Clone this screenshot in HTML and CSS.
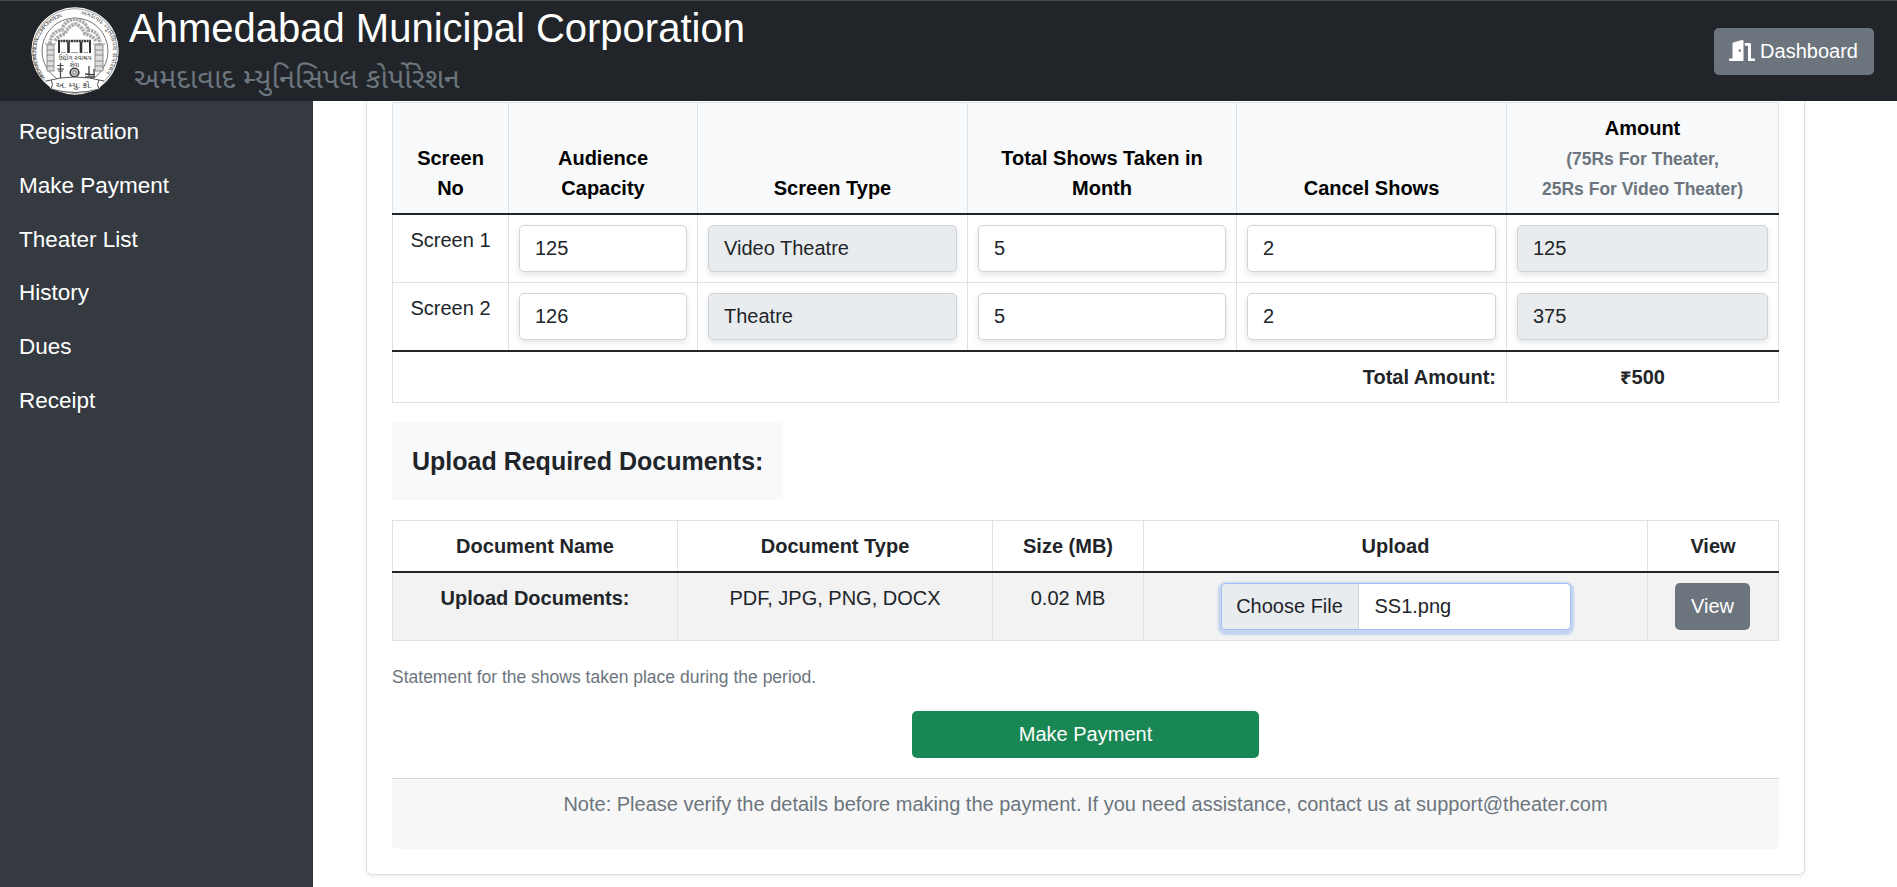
FILE: index.html
```html
<!DOCTYPE html>
<html lang="en">
<head>
<meta charset="utf-8">
<title>Ahmedabad Municipal Corporation</title>
<link rel="stylesheet" href="styles.css">
</head>
<body>
<header class="topbar">
  <svg class="seal" viewBox="0 0 88 88" aria-hidden="true">
    <defs>
      <path id="arcLeft" d="M14.2 70.5A38 38 0 0 1 36 8.500"/>
      <path id="arcRight" d="M50 7.500A37 37 0 0 1 71.500 70"/>
    </defs>
    <circle cx="44" cy="44" r="43.700" fill="#fff"/>
    <circle cx="44" cy="44" r="42.300" fill="none" stroke="#777" stroke-width=".7"/>
    <circle cx="44" cy="44" r="33" fill="none" stroke="#555" stroke-width=".8"/>
    <text class="seal-ring"><textPath href="#arcLeft" textLength="74">AMDAVAD MUNICIPAL CORPORATION</textPath></text>
    <text class="seal-ring seal-ring-gu"><textPath href="#arcRight" textLength="76">અમદાવાદ મ્યુનિસિપલ કોર્પોરેશન</textPath></text>
    <g fill="none" stroke="#aaa" stroke-width="3.600" stroke-dasharray="2.500 .8">
      <path d="M19 37Q20 24 31 23Q33 14 44 12Q55 14 57 23Q68 24 69 37"/>
      <path d="M24 34Q28 28 34 27Q37 19 44 17Q51 19 54 27Q61 28 65 34"/>
    </g>
    <g fill="#ddd" stroke="#777" stroke-width=".8">
      <path d="M16 38h7v26h-7zM64 38h8v26h-8z"/>
      <path d="M14 37h11M62 37h12M16 43h7M16 48h7M16 54h7M16 59h7M64 43h8M64 48h8M64 54h8M64 59h8"/>
    </g>
    <g stroke="#333" fill="none">
      <path d="M27 34h33" stroke-width="2.500" stroke-dasharray="2 .6"/>
      <path d="M28 35v11M59 35v11" stroke-width="2"/>
      <path d="M37.500 35v11M50 35v11" stroke-width="2.600"/>
      <path d="M30 45.500h5M40 45.500h7M53 45.500h4" stroke="#999" stroke-width="1"/>
    </g>
    <text class="seal-text" x="44" y="52.800" font-size="6.500" textLength="33" lengthAdjust="spacingAndGlyphs">ઉદ્યોગ સ્વાશ્રય</text>
    <text class="seal-text" x="43.500" y="59.500" font-size="6">સેવા</text>
    <circle cx="43.500" cy="65.500" r="4.400" fill="#bbb" stroke="#333" stroke-width="1.400"/>
    <circle cx="43.500" cy="65.500" r="1.500" fill="#fff" stroke="#444" stroke-width=".6"/>
    <g fill="none" stroke="#444">
      <path d="M29.500 56v17M26.500 58.500h6M26 62h7M27 64h5" stroke-width="1.200"/>
      <path d="M58 59v10M63 62v6M54 70h10M54 67l10 1M56 73l5-2" stroke-width="1.300"/>
    </g>
    <path d="M15 74Q44 66 73 74L68 82Q44 90 20 82Z" fill="#fff"/>
    <path d="M15 74Q44 66 73 74M20 82Q23 77 20 73M68 82Q65 77 68 73M20 82Q44 89 68 82" fill="none" stroke="#444" stroke-width=".9"/>
    <text class="seal-text" x="43" y="80.500" font-size="8" textLength="36" lengthAdjust="spacingAndGlyphs">અ. મ્યુ. કો.</text>
  </svg>
  <div class="brand">
    <h1 class="brand-name"><span>Ahmedabad Municipal Corporation</span></h1>
    <p class="brand-local"><span>અમદાવાદ મ્યુનિસિપલ કોર્પોરેશન</span></p>
  </div>
  <a class="btn btn-grey dashboard" href="#">
    <svg class="door" viewBox="0 0 26 22" aria-hidden="true">
      <path fill="#fff" fill-rule="evenodd" d="M0 18.500h3.500V4Q3.500 2.700 4.800 2.300L13 .1Q14.500-.2 14.500 1V21H1Q0 21 0 20ZM10.800 9.200a1.200 1.400 0 1 0 .01 0ZM15.800 3H20.500Q22 3 22 4.500V18.500H26V20Q26 21 25 21H19V5.700H15.800Z"/>
    </svg>
    <span>Dashboard</span>
  </a>
</header>
<div class="shell">
  <nav class="sidebar">
    <a href="#">Registration</a>
    <a href="#">Make Payment</a>
    <a href="#">Theater List</a>
    <a href="#">History</a>
    <a href="#">Dues</a>
    <a href="#">Receipt</a>
  </nav>
  <main class="content">
    <section class="card">
      <table class="grid shows">
        <colgroup><col class="s1"><col class="s2"><col class="s3"><col class="s4"><col class="s5"><col class="s6"></colgroup>
        <thead>
          <tr>
            <th>Screen<br>No</th>
            <th>Audience<br>Capacity</th>
            <th>Screen Type</th>
            <th>Total Shows Taken in<br>Month</th>
            <th>Cancel Shows</th>
            <th>Amount<br><small>(75Rs For Theater,<br>25Rs For Video Theater)</small></th>
          </tr>
        </thead>
        <tbody>
          <tr>
            <td>Screen 1</td>
            <td><div class="field">125</div></td>
            <td><div class="field locked">Video Theatre</div></td>
            <td><div class="field">5</div></td>
            <td><div class="field">2</div></td>
            <td><div class="field locked">125</div></td>
          </tr>
          <tr>
            <td>Screen 2</td>
            <td><div class="field">126</div></td>
            <td><div class="field locked">Theatre</div></td>
            <td><div class="field">5</div></td>
            <td><div class="field">2</div></td>
            <td><div class="field locked">375</div></td>
          </tr>
        </tbody>
        <tfoot>
          <tr><td class="total-label" colspan="5">Total Amount:</td><td class="total">₹500</td></tr>
        </tfoot>
      </table>

      <h2 class="section-title">Upload Required Documents:</h2>

      <table class="grid docs">
        <colgroup><col class="d1"><col class="d2"><col class="d3"><col class="d4"><col class="d5"></colgroup>
        <thead>
          <tr><th>Document Name</th><th>Document Type</th><th>Size (MB)</th><th>Upload</th><th>View</th></tr>
        </thead>
        <tbody>
          <tr>
            <td><b>Upload Documents:</b></td>
            <td>PDF, JPG, PNG, DOCX</td>
            <td>0.02 MB</td>
            <td><div class="file"><span class="file-btn">Choose File</span><span class="file-name">SS1.png</span></div></td>
            <td><a class="btn btn-grey" href="#">View</a></td>
          </tr>
        </tbody>
      </table>

      <p class="hint">Statement for the shows taken place during the period.</p>
      <a class="btn btn-green" href="#">Make Payment</a>
      <footer class="note">Note: Please verify the details before making the payment. If you need assistance, contact us at support@theater.com</footer>
    </section>
  </main>
</div>
</body>
</html>
```
FILE: styles.css
```css
* { box-sizing: border-box; }
body {
  margin: 0;
  height: 887px;
  overflow: hidden;
  display: flex;
  flex-direction: column;
  background: #fff;
  color: #212529;
  font: 20px/30px "Liberation Sans", Arial, "Noto Sans Gujarati", sans-serif;
}
a { color: inherit; text-decoration: none; }
h1, h2, p { margin: 0; font-weight: 400; }

.topbar {
  flex: none;
  height: 101px;
  display: flex;
  align-items: flex-start;
  padding: 0 23px 0 31px;
  background: #212529;
  border-top: 1px solid #434847;
}
.seal { width: 88px; height: 88px; margin-top: 6px; flex: none; }
.seal-ring { font-size: 5.4px; fill: #444; }
.seal-ring-gu { font-size: 6px; }
.seal-text { fill: #333; text-anchor: middle; }
.brand { flex: 1; padding-left: 10px; }
.brand-name { font-size: 40px; line-height: 48px; margin-top: 3px; color: #fff; }
.brand-local { font-size: 28.700px; line-height: 38px; padding-left: 5px; margin-top: 7px; color: #6c757d; }

.btn {
  display: inline-flex;
  align-items: center;
  justify-content: center;
  height: 47px;
  padding: 0 16px;
  border-radius: 5px;
  color: #fff;
}
.btn-grey { background: #6c757d; }
.btn-green { display: flex; width: 347px; margin: 19px auto 0; background: #198754; }
.dashboard { margin-top: 27px; width: 160px; padding: 0 1px 1px 0; gap: 5px; }
.door { width: 26px; height: 22px; }

.shell { flex: 1; display: flex; min-height: 0; }
.sidebar {
  width: 313px;
  flex: none;
  display: flex;
  flex-direction: column;
  padding-top: 4px;
  background: #343a40;
  color: #fff;
  font-size: 22.500px;
}
.sidebar a { height: 53.800px; line-height: 54px; padding-left: 19px; }

.content { flex: 1; padding: 0 93px 12px 53px; }
.card {
  height: 774px;
  padding: 1px 25px 0;
  border: 1px solid #dfdfdf;
  border-top: 0;
  border-radius: 0 0 6px 6px;
  box-shadow: 0 2px 5px rgba(0, 0, 0, .075);
}

.grid { width: 100%; table-layout: fixed; border-collapse: collapse; text-align: center; }
.grid th, .grid td { border: 1px solid #dee2e6; padding: 10px; vertical-align: top; }
.grid th { vertical-align: bottom; }
.grid tbody tr:first-child td { border-top: 2px solid #212529; }
.shows th { height: 111px; padding-top: 9px; background: #f8f9fa; color: #000; }
.shows small { font-size: 17.500px; line-height: 26px; color: #6c757d; }
.shows tbody td { height: 68px; }
.shows tbody td:first-child { padding: 10px 0; }
.shows tfoot td { border-top: 2px solid #212529; height: 51px; font-weight: 700; }
.shows tfoot .total-label { text-align: right; }
.s1 { width: 116px; } .s2 { width: 189px; } .s3 { width: 270px; }
.s4 { width: 269px; } .s5 { width: 270px; } .s6 { width: 272px; }

.field {
  height: 47px;
  padding: 0 15px;
  line-height: 45px;
  text-align: left;
  background: #fff;
  border: 1px solid #ced4da;
  border-radius: 5px;
  box-shadow: 0 3px 6px rgba(0, 0, 0, .1);
}
.locked { background: #e9ecef; }

.section-title {
  width: 391px;
  height: 77px;
  margin: 20px 0;
  padding-left: 20px;
  line-height: 77px;
  background: #f8f9fa;
  font-size: 25px;
  font-weight: 700;
}

.docs th { height: 51px; }
.docs tbody td { height: 68px; background: #f2f2f2; }
.d1 { width: 285px; } .d2 { width: 315px; } .d3 { width: 151px; }
.d4 { width: 504px; } .d5 { width: 131px; }
.docs .btn { width: 75px; padding: 0; margin-right: 1px; }
.file {
  display: flex;
  width: 350px;
  height: 47px;
  margin: 0 auto;
  line-height: 45px;
  background: #fff;
  border: 1px solid #9ec0f5;
  border-radius: 5px;
  box-shadow: 0 2px 2px 3px rgba(13, 90, 230, .2);
}
.file-btn { width: 137px; background: #e9ecef; border-right: 1px solid #ced4da; border-radius: 4px 0 0 4px; }
.file-name { padding-left: 16px; }

.hint { margin-top: 21px; font-size: 17.500px; color: #6c757d; }
.note {
  height: 71px;
  margin-top: 20px;
  padding-top: 10px;
  text-align: center;
  background: #f7f7f7;
  border-top: 1px solid #d8d8d8;
  border-radius: 0 0 5px 5px;
  color: #6c757d;
}
```
